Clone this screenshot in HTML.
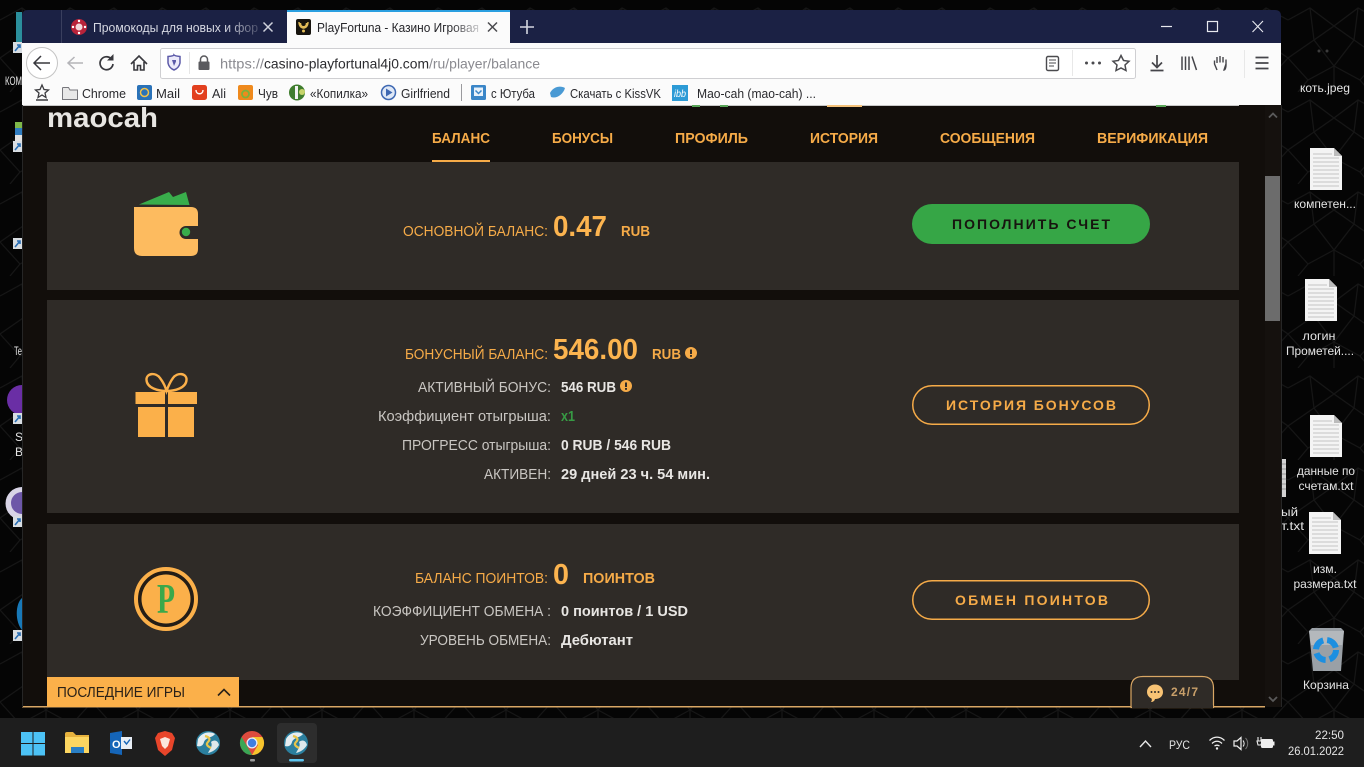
<!DOCTYPE html>
<html lang="ru"><head><meta charset="utf-8"><title>PlayFortuna</title>
<style>
html,body{margin:0;padding:0;background:#050505;width:1364px;height:767px;overflow:hidden}
svg{display:block;filter:blur(.35px)}
text{font-family:"Liberation Sans","Noto Sans CJK SC",sans-serif;white-space:pre}
.b{font-weight:700}
.o{fill:#f6ab48}.w{fill:#e8e6e3}.g{fill:#c9c6c2}
.d{fill:#e4e4e4;font-size:12px}
.bm{fill:#2a2a2e;font-size:12.5px}
</style></head><body>
<svg width="1364" height="767" viewBox="0 0 1364 767" xmlns="http://www.w3.org/2000/svg">
<defs>
<linearGradient id="f1" gradientUnits="userSpaceOnUse" x1="225" y1="0" x2="258" y2="0"><stop offset="0" stop-color="#d6d8e2"/><stop offset="1" stop-color="#4a4e6a"/></linearGradient>
<linearGradient id="f2" gradientUnits="userSpaceOnUse" x1="450" y1="0" x2="480" y2="0"><stop offset="0" stop-color="#26262a"/><stop offset="1" stop-color="#d4d4d6"/></linearGradient>
<pattern id="pt" width="92" height="92" patternUnits="userSpaceOnUse">
<path d="M0 20L22 8L46 26L70 8L92 20M22 8L26 40L0 58M70 8L66 40L92 58M26 40L46 26L66 40L46 66L26 40M46 66L46 92M0 58L20 80L46 66L72 80L92 58M20 80L10 92M72 80L82 92" fill="none" stroke="#161616" stroke-width="1.2"/>
</pattern>
<g id="doc"><path d="M0 0H24L32 8V42H0Z" fill="#f4f4f4"/><path d="M24 0V8H32Z" fill="#bcbcbc"/><path d="M3 6H22M3 10H29M3 14H29M3 18H29M3 22H29M3 26H29M3 30H29M3 34H29M3 38H29" stroke="#c4c4c4" stroke-width="1"/></g>
<g id="arr"><rect width="9" height="11" fill="#d8dde2"/><path d="M2 9L7 3M4 3H7V6" stroke="#2a6fb5" stroke-width="1.6" fill="none"/></g>
<g id="globe"><circle r="12" fill="#2b7f9e"/><path d="M-10-4C-6-11 2-12 7-9C4-5-2-6-4-1C-5 3-8 4-11 3Z" fill="#e6edf0"/><path d="M3-1C7-4 10-2 11 2C8 7 4 9 0 10C2 6 5 3 3-1Z" fill="#dfe8ea"/><path d="M-3-7C1-6 3-4 0-1C-3 2 1 4 3 5" stroke="#e8c64a" stroke-width="2.2" fill="none"/></g>
<g id="inf"><circle r="6" fill="#f6ab48"/><rect x="-1" y="-3.500" width="2" height="4.500" fill="#2f2b27"/><rect x="-1" y="2" width="2" height="1.800" fill="#2f2b27"/></g>
</defs>

<!-- desktop -->
<rect width="1364" height="767" fill="#050505"/>
<rect width="1364" height="720" fill="url(#pt)"/>
<rect x="16" y="12" width="6" height="30" fill="#2b8f9c"/>
<use href="#arr" x="13" y="42"/>
<text x="5" y="85" class="d" textLength="17" lengthAdjust="spacingAndGlyphs">КОМ</text>
<rect x="15" y="122" width="7" height="6" fill="#7fb84a"/><rect x="15" y="128" width="7" height="7" fill="#2f7cc0"/><rect x="15" y="135" width="7" height="6" fill="#e2e2e2"/>
<use href="#arr" x="13" y="141"/>
<use href="#arr" x="13" y="238"/>
<text x="14" y="355" class="d" textLength="8" lengthAdjust="spacingAndGlyphs">Te</text>
<path d="M22 385A15 15 0 0 0 22 415Z" fill="#6a2ea5"/>
<use href="#arr" x="13" y="413"/>
<text x="15" y="441" class="d">S</text><text x="15" y="456" class="d">B</text>
<path d="M22 487A16 16 0 0 0 22 520Z" fill="#d8d4e6"/><path d="M22 492A11 11 0 0 0 22 514Z" fill="#6d57a8"/>
<use href="#arr" x="13" y="516"/>
<path d="M22 598C15 604 15 622 22 630Z" fill="#1879b8"/>
<use href="#arr" x="13" y="630"/>

<circle cx="1319" cy="51" r="1.500" fill="#3c3c3c"/><circle cx="1327" cy="51" r="1.500" fill="#3c3c3c"/>
<text x="1325" y="92" class="d" text-anchor="middle" textLength="50" lengthAdjust="spacingAndGlyphs">коть.jpeg</text>
<use href="#doc" x="1310" y="148"/>
<text x="1325" y="208" class="d" text-anchor="middle" textLength="62" lengthAdjust="spacingAndGlyphs">компетен...</text>
<use href="#doc" x="1305" y="279"/>
<text x="1319" y="340" class="d" text-anchor="middle" textLength="33" lengthAdjust="spacingAndGlyphs">логин</text>
<text x="1320" y="355" class="d" text-anchor="middle" textLength="68" lengthAdjust="spacingAndGlyphs">Прометей....</text>
<use href="#doc" x="1310" y="415"/>
<text x="1326" y="475" class="d" text-anchor="middle" textLength="58" lengthAdjust="spacingAndGlyphs">данные по</text>
<text x="1326" y="490" class="d" text-anchor="middle" textLength="55" lengthAdjust="spacingAndGlyphs">счетам.txt</text>
<rect x="1281" y="459" width="5" height="38" fill="#d2d2d2"/>
<path d="M1281 464H1286M1281 469H1286M1281 474H1286M1281 479H1286M1281 484H1286M1281 489H1286" stroke="#9a9a9a"/>
<text x="1281" y="516" class="d" textLength="17" lengthAdjust="spacingAndGlyphs">ый</text>
<text x="1281" y="530" class="d" textLength="23" lengthAdjust="spacingAndGlyphs">т.txt</text>
<use href="#doc" x="1309" y="512"/>
<text x="1325" y="573" class="d" text-anchor="middle" textLength="24" lengthAdjust="spacingAndGlyphs">изм.</text>
<text x="1325" y="588" class="d" text-anchor="middle" textLength="63" lengthAdjust="spacingAndGlyphs">размера.txt</text>
<path d="M1309 631L1312 628H1341L1344 631L1341 671H1313Z" fill="#9aa0a6"/><path d="M1309 631L1344 631L1342 645H1311Z" fill="#b4b8bc"/>
<circle cx="1326" cy="650" r="10" fill="none" stroke="#1d8fe0" stroke-width="6" stroke-dasharray="12 4"/>
<text x="1326" y="689" class="d" text-anchor="middle" textLength="46" lengthAdjust="spacingAndGlyphs">Корзина</text>

<!-- window -->
<rect x="22" y="105" width="1259" height="602" fill="#120e0b"/>
<path d="M22 43V16Q22 10 28 10H1275Q1281 10 1281 16V43Z" fill="#1b2144"/>
<rect x="22" y="43" width="1259" height="62" fill="#fbfbfb"/>
<rect x="22" y="105" width="1259" height="1" fill="#c8c8c8"/>

<!-- tabs -->
<rect x="61" y="10" width="1" height="33" fill="#3a3f5e"/>
<rect x="287" y="11" width="223" height="32" fill="#fbfbfb"/>
<rect x="287" y="10" width="223" height="2" fill="#2a9fe0"/>
<circle cx="79" cy="27" r="8" fill="#b8233a"/><circle cx="79" cy="27" r="3.500" fill="#f1d7da"/><circle cx="79" cy="21" r="1.200" fill="#fff"/><circle cx="73" cy="27" r="1.200" fill="#fff"/><circle cx="85" cy="27" r="1.200" fill="#fff"/><circle cx="79" cy="33" r="1.200" fill="#fff"/>
<text x="93" y="32" font-size="13" fill="url(#f1)" textLength="165" lengthAdjust="spacingAndGlyphs">Промокоды для новых и фор</text>
<path d="M263.500 22.500L272.500 31.500M272.500 22.500L263.500 31.500" stroke="#cfd1dc" stroke-width="1.500"/>
<rect x="296" y="19" width="15" height="16" rx="2" fill="#17140e"/><path d="M299 22C299 30 308 30 308 22M300.500 23C300.500 28 306.500 28 306.500 23" stroke="#e2bc58" stroke-width="1.400" fill="none"/><circle cx="303.500" cy="31" r="1.500" fill="#e2bc58"/>
<text x="317" y="32" font-size="12.500" fill="url(#f2)" textLength="162" lengthAdjust="spacingAndGlyphs">PlayFortuna - Казино Игровая</text>
<path d="M488 22.500L497 31.500M497 22.500L488 31.500" stroke="#4a4a4e" stroke-width="1.500"/>
<path d="M527 20V34M520 27H534" stroke="#d4d6e0" stroke-width="1.600"/>
<path d="M1161 26.500H1172" stroke="#e8e9ef" stroke-width="1.200"/>
<rect x="1207.500" y="21.500" width="10" height="10" fill="none" stroke="#e8e9ef" stroke-width="1.200"/>
<path d="M1252.500 21L1263 32M1263 21L1252.500 32" stroke="#e8e9ef" stroke-width="1.100"/>

<!-- toolbar -->
<circle cx="42" cy="63" r="15.500" fill="#fff" stroke="#c4c4c4" stroke-width="1"/>
<path d="M50 63H34M41 56L34 63L41 70" fill="none" stroke="#38383d" stroke-width="1.500"/>
<path d="M83 63H68M74.500 57L68 63L74.500 69" fill="none" stroke="#b4b4b8" stroke-width="1.500"/>
<path d="M113 64A6.500 6.500 0 1 1 111 58.500" fill="none" stroke="#38383d" stroke-width="1.700"/><path d="M113.500 54V60.500H107Z" fill="#38383d"/>
<path d="M131 64L139 56L147 64M134 62V70H137.500V65.500H140.500V70H144V62" fill="none" stroke="#38383d" stroke-width="1.600"/>
<rect x="160.500" y="48.500" width="975" height="30" rx="2" fill="#fff" stroke="#cfcfd2"/>
<path d="M168 56.500Q174 56 174 55Q175 56 180 56.500V63Q179 68 174 70Q169 68 168 63Z" fill="#eceafa" stroke="#5c5aa8" stroke-width="1.500"/><path d="M172 60H176V61.500L174 66Z" fill="#5c5aa8"/>
<rect x="189" y="52" width="1" height="22" fill="#e6e6e6"/>
<rect x="198.500" y="61.500" width="11" height="8.500" rx="1" fill="#5a5a5e"/><path d="M200.500 61.500V59.500A3.500 3.500 0 0 1 207.500 59.500V61.500" fill="none" stroke="#5a5a5e" stroke-width="1.500"/>
<text x="220" y="68.500" font-size="14" fill="#8a8a90" textLength="44" lengthAdjust="spacingAndGlyphs">https://</text>
<text x="264" y="68.500" font-size="14" fill="#2c2c30" textLength="165" lengthAdjust="spacingAndGlyphs">casino-playfortunal4j0.com</text>
<text x="429" y="68.500" font-size="14" fill="#8a8a90" textLength="111" lengthAdjust="spacingAndGlyphs">/ru/player/balance</text>
<rect x="1046.500" y="56.500" width="12" height="14" rx="1.500" fill="none" stroke="#4a4a4e" stroke-width="1.400"/><path d="M1049 60H1056M1049 63H1056M1049 66H1054" stroke="#4a4a4e"/>
<rect x="1072" y="50" width="1" height="26" fill="#e8e8e8"/>
<circle cx="1086.500" cy="63" r="1.500" fill="#4a4a4e"/><circle cx="1093" cy="63" r="1.500" fill="#4a4a4e"/><circle cx="1099.500" cy="63" r="1.500" fill="#4a4a4e"/>
<path d="M1121 55.500L1123.500 60.500L1129 61.300L1125 65L1126 70.500L1121 68L1116 70.500L1117 65L1113 61.300L1118.500 60.500Z" fill="none" stroke="#4a4a4e" stroke-width="1.500"/>
<path d="M1157 55V67M1152 62.500L1157 67.500L1162 62.500M1150.500 70.500H1163.500" fill="none" stroke="#45454a" stroke-width="1.700"/>
<path d="M1182 56.500V70M1185.500 56.500V70M1189 56.500V70M1192 56.500L1196.500 70" fill="none" stroke="#45454a" stroke-width="1.500"/>
<path d="M1217 70L1214.500 64V60.500M1217 63V57M1220 62.500V56M1223 62.500V57M1226 64V59.500V65C1226 68 1225 70 1224 70Z" fill="none" stroke="#45454a" stroke-width="1.400"/>
<rect x="1244" y="50" width="1" height="28" fill="#e8e8e8"/>
<path d="M1255.500 57.500H1268.500M1255.500 63H1268.500M1255.500 68.500H1268.500" stroke="#45454a" stroke-width="1.800"/>

<!-- bookmarks -->
<path d="M42 85L44 89.500L48.500 90L45 93L46 97.500L42 95L38 97.500L39 93L35.500 90L40 89.500Z" fill="none" stroke="#3c3c40" stroke-width="1.300"/><path d="M36 100H48" stroke="#3c3c40" stroke-width="1.500"/>
<path d="M62.500 88V99.500H77.500V90H70L68.500 87.500H63Z" fill="#e8e8e8" stroke="#77777c"/>
<text x="82" y="98" class="bm" textLength="44" lengthAdjust="spacingAndGlyphs">Chrome</text>
<rect x="137" y="85" width="15" height="15" rx="2" fill="#2a72b8"/><circle cx="144.500" cy="92.500" r="4" fill="none" stroke="#f2c14a" stroke-width="1.500"/>
<text x="156" y="98" class="bm" textLength="24" lengthAdjust="spacingAndGlyphs">Mail</text>
<rect x="192" y="85" width="15" height="15" rx="2.500" fill="#e2401f"/><path d="M196 90C196 95 203 95 203 90" stroke="#fff" stroke-width="1.400" fill="none"/>
<text x="212" y="98" class="bm" textLength="14" lengthAdjust="spacingAndGlyphs">Ali</text>
<rect x="238" y="85" width="15" height="15" rx="2" fill="#ef8a1d"/><circle cx="245.500" cy="94" r="3.500" fill="none" stroke="#7cb23a" stroke-width="1.800"/>
<text x="258" y="98" class="bm" textLength="20" lengthAdjust="spacingAndGlyphs">Чув</text>
<circle cx="297" cy="92.500" r="8" fill="#3f7d2e"/><rect x="295" y="86" width="3" height="13" fill="#f2f2f2"/><circle cx="302" cy="92" r="3" fill="#c6d46a"/>
<text x="310" y="98" class="bm" textLength="58" lengthAdjust="spacingAndGlyphs">«Копилка»</text>
<circle cx="388.500" cy="92.500" r="7" fill="#dfe8f6" stroke="#3e68b2" stroke-width="1.500"/><path d="M386 88.500V96.500L392.500 92.500Z" fill="#3e68b2"/>
<text x="401" y="98" class="bm" textLength="49" lengthAdjust="spacingAndGlyphs">Girlfriend</text>
<rect x="461" y="84" width="1" height="17" fill="#9a9a9e"/>
<rect x="471" y="85" width="15" height="15" rx="1.500" fill="#3a86c8"/><path d="M474 87.500H483V96H474Z" fill="#e8f1fa"/><path d="M475.500 90.500L478.500 93.500L481.500 90.500" stroke="#3a86c8" stroke-width="1.500" fill="none"/>
<text x="491" y="98" class="bm" textLength="44" lengthAdjust="spacingAndGlyphs">с Ютуба</text>
<path d="M550 93C553 87 560 85 565 88C563 95 556 99 551 97Z" fill="#4a9ad4"/>
<text x="570" y="98" class="bm" textLength="91" lengthAdjust="spacingAndGlyphs">Скачать с KissVK</text>
<rect x="672" y="85" width="16" height="16" fill="#2d9bd6"/>
<text x="674" y="97" font-size="10" font-style="italic" fill="#fff" textLength="12" lengthAdjust="spacingAndGlyphs">ibb</text>
<text x="697" y="98" class="bm" textLength="119" lengthAdjust="spacingAndGlyphs">Mao-cah (mao-cah) ...</text>

<!-- page strip leaks -->
<rect x="827" y="105" width="35" height="2" fill="#f5c27a"/>
<rect x="692" y="105" width="8" height="2" fill="#5aa65a"/><rect x="720" y="105" width="8" height="2" fill="#5aa65a"/>
<rect x="1156" y="105" width="10" height="2" fill="#5aa65a"/>

<!-- header -->
<text x="47" y="127" class="b w" font-size="28" fill="#f0efee" textLength="111" lengthAdjust="spacingAndGlyphs">maocah</text>
<g class="b o" font-size="14.500">
<text x="432" y="143" textLength="58" lengthAdjust="spacingAndGlyphs">БАЛАНС</text>
<text x="552" y="143" textLength="61" lengthAdjust="spacingAndGlyphs">БОНУСЫ</text>
<text x="675" y="143" textLength="73" lengthAdjust="spacingAndGlyphs">ПРОФИЛЬ</text>
<text x="810" y="143" textLength="68" lengthAdjust="spacingAndGlyphs">ИСТОРИЯ</text>
<text x="940" y="143" textLength="95" lengthAdjust="spacingAndGlyphs">СООБЩЕНИЯ</text>
<text x="1097" y="143" textLength="111" lengthAdjust="spacingAndGlyphs">ВЕРИФИКАЦИЯ</text>
</g>

<!-- cards -->
<rect x="47" y="162" width="1192" height="128" fill="#2f2b27"/>
<rect x="47" y="300" width="1192" height="213" fill="#2f2b27"/>
<rect x="47" y="524" width="1192" height="156" fill="#2f2b27"/>
<rect x="432" y="160" width="58" height="2" fill="#f6ab48"/>

<!-- wallet -->
<path d="M139 204.500L169 192L173 197L186 192L189.500 205Z" fill="#39ad4b"/>
<path d="M134 207H191Q198 207 198 214V226H186A6.500 6.500 0 0 0 186 239H198V249Q198 256 191 256H142Q134 256 134 248Z" fill="#fdbb5f"/>
<circle cx="186" cy="232" r="4.200" fill="#39ad4b"/>

<!-- gift -->
<g fill="#fbb04a">
<rect x="135.500" y="392" width="29.500" height="12"/><rect x="168" y="392" width="29" height="12"/>
<rect x="138" y="407" width="27" height="30"/><rect x="168" y="407" width="26" height="30"/>
</g>
<path d="M166.500 391C158 391 147 388 146.500 380C146 373 156 372 160 378C163 382 165.500 387 166.500 391C168 387 170 382 173 378C177 372 187 373 186.500 380C186 388 175 391 166.500 391Z" fill="none" stroke="#fbb04a" stroke-width="2.400"/>

<!-- coin -->
<circle cx="166" cy="599" r="30" fill="#241d16" stroke="#fbb04a" stroke-width="4"/>
<circle cx="166" cy="599" r="24.500" fill="#fbb04a"/>
<text x="157" y="613" font-size="42" font-weight="700" style="font-family:'Liberation Serif',serif" fill="#3ba84a" textLength="18" lengthAdjust="spacingAndGlyphs">P</text>

<!-- card1 text -->
<text x="403" y="236" class="o" font-size="15" textLength="145" lengthAdjust="spacingAndGlyphs">ОСНОВНОЙ БАЛАНС:</text>
<text x="553" y="236" class="b" fill="#fcb44f" font-size="29" textLength="54" lengthAdjust="spacingAndGlyphs">0.47</text>
<text x="621" y="236" class="b o" font-size="14.500" textLength="29" lengthAdjust="spacingAndGlyphs">RUB</text>
<rect x="912" y="204" width="238" height="40" rx="20" fill="#36a646"/>
<text x="952" y="229" class="b" font-size="14" fill="#17140f" textLength="158" lengthAdjust="spacing">ПОПОЛНИТЬ СЧЕТ</text>

<!-- card2 text -->
<text x="405" y="359" class="o" font-size="15" textLength="143" lengthAdjust="spacingAndGlyphs">БОНУСНЫЙ БАЛАНС:</text>
<text x="553" y="359" class="b" fill="#fcb44f" font-size="29" textLength="85" lengthAdjust="spacingAndGlyphs">546.00</text>
<text x="652" y="359" class="b o" font-size="14.500" textLength="29" lengthAdjust="spacingAndGlyphs">RUB</text>
<use href="#inf" x="691" y="353"/>
<text x="418" y="392" class="g" font-size="15" textLength="133" lengthAdjust="spacingAndGlyphs">АКТИВНЫЙ БОНУС:</text>
<text x="561" y="392" class="b w" font-size="14.500" textLength="55" lengthAdjust="spacingAndGlyphs">546 RUB</text>
<use href="#inf" x="626" y="386"/>
<text x="378" y="421" class="g" font-size="15" textLength="173" lengthAdjust="spacingAndGlyphs">Коэффициент отыгрыша:</text>
<text x="561" y="421" class="b" font-size="14.500" fill="#379a44" textLength="14" lengthAdjust="spacingAndGlyphs">x1</text>
<text x="402" y="450" class="g" font-size="15" textLength="149" lengthAdjust="spacingAndGlyphs">ПРОГРЕСС отыгрыша:</text>
<text x="561" y="450" class="b w" font-size="14.500" textLength="110" lengthAdjust="spacingAndGlyphs">0 RUB / 546 RUB</text>
<text x="484" y="479" class="g" font-size="15" textLength="67" lengthAdjust="spacingAndGlyphs">АКТИВЕН:</text>
<text x="561" y="479" class="b w" font-size="14.500" textLength="149" lengthAdjust="spacingAndGlyphs">29 дней 23 ч. 54 мин.</text>
<rect x="912.750" y="385.750" width="236.500" height="38.500" rx="19.250" fill="none" stroke="#f6ab48" stroke-width="1.500"/>
<text x="946" y="410" class="b o" font-size="14" textLength="170" lengthAdjust="spacing">ИСТОРИЯ БОНУСОВ</text>

<!-- card3 text -->
<text x="415" y="583" class="o" font-size="15" textLength="133" lengthAdjust="spacingAndGlyphs">БАЛАНС ПОИНТОВ:</text>
<text x="553" y="584" class="b" fill="#fcb44f" font-size="29" textLength="16" lengthAdjust="spacingAndGlyphs">0</text>
<text x="583" y="583" class="b o" font-size="14.500" textLength="72" lengthAdjust="spacingAndGlyphs">ПОИНТОВ</text>
<text x="373" y="616" class="g" font-size="15" textLength="178" lengthAdjust="spacingAndGlyphs">КОЭФФИЦИЕНТ ОБМЕНА :</text>
<text x="561" y="616" class="b w" font-size="14.500" textLength="127" lengthAdjust="spacingAndGlyphs">0 поинтов / 1 USD</text>
<text x="420" y="645" class="g" font-size="15" textLength="131" lengthAdjust="spacingAndGlyphs">УРОВЕНЬ ОБМЕНА:</text>
<text x="561" y="645" class="b w" font-size="14.500" textLength="72" lengthAdjust="spacingAndGlyphs">Дебютант</text>
<rect x="912.750" y="580.750" width="236.500" height="38.500" rx="19.250" fill="none" stroke="#f6ab48" stroke-width="1.500"/>
<text x="955" y="605" class="b o" font-size="14" textLength="153" lengthAdjust="spacing">ОБМЕН ПОИНТОВ</text>

<!-- bottom bar -->
<rect x="1239" y="105" width="26" height="602" fill="#120e0b"/>
<rect x="47" y="680" width="1192" height="26" fill="#120e0b"/>
<rect x="22" y="706" width="1243" height="1.500" fill="#d9a765"/>
<rect x="47" y="677" width="192" height="30" fill="#fbb04a"/>
<text x="57" y="697" font-size="14.500" fill="#2a2118" textLength="128" lengthAdjust="spacingAndGlyphs">ПОСЛЕДНИЕ ИГРЫ</text>
<path d="M218 695.500L224 689.500L230 695.500" fill="none" stroke="#2a2118" stroke-width="1.600"/>
<path d="M1131 707.500V688Q1131 676.500 1143 676.500H1202Q1213.500 676.500 1213.500 688V707.500Z" fill="#2f2b27" stroke="#d9a765" stroke-width="1.200"/>
<rect x="1132" y="705" width="81" height="3" fill="#2f2b27"/>
<path d="M1155 684.500C1160 684.500 1163 688 1163 692C1163 696 1160 699 1155 699C1154.500 701 1153 702 1151 702C1152 701 1152 699.500 1151.500 698.500C1149 697.500 1147 695 1147 692C1147 688 1150 684.500 1155 684.500Z" fill="#f8c374"/>
<circle cx="1151.500" cy="692" r="1" fill="#2f2b27"/><circle cx="1155" cy="692" r="1" fill="#2f2b27"/><circle cx="1158.500" cy="692" r="1" fill="#2f2b27"/>
<text x="1171" y="696" class="b" font-size="12" fill="#c9a06a" textLength="27" lengthAdjust="spacing">24/7</text>

<!-- scrollbar -->
<rect x="1265" y="105" width="16" height="602" fill="#15110e"/>
<rect x="1265" y="176" width="15" height="145" fill="#6c6c6c"/>
<path d="M1269 117.500L1273 113.500L1277 117.500" fill="none" stroke="#5a5a5a" stroke-width="1.800"/>
<path d="M1269 697L1273 701L1277 697" fill="none" stroke="#5a5a5a" stroke-width="1.800"/>
<rect x="1281" y="105" width="1" height="602" fill="#262626"/>
<rect x="22" y="105" width="1" height="602" fill="#262626"/>

<!-- taskbar -->
<rect y="718" width="1364" height="49" fill="#1e1e1e"/>
<rect x="277" y="723" width="40" height="40" rx="4" fill="#2d2d2d"/>
<g fill="#4cc2f5"><rect x="21" y="732" width="11.500" height="11"/><rect x="33.500" y="732" width="11.500" height="11"/><rect x="21" y="744" width="11.500" height="11.500"/><rect x="33.500" y="744" width="11.500" height="11.500"/></g>
<path d="M65 734Q65 732 67 732H73L76 735H89V753H65Z" fill="#e6b23e"/><rect x="65" y="737" width="24" height="16" fill="#fcd661"/><rect x="71" y="747" width="13" height="6" fill="#2a7fc4"/>
<path d="M110 733L122 731V755L110 753Z" fill="#1565b8"/><rect x="121" y="737" width="11" height="12" fill="#e8eef5"/><text x="112" y="748" class="b" font-size="11" fill="#fff">O</text><path d="M124 741L126.500 744L130 739.500" stroke="#1565b8" stroke-width="1.400" fill="none"/>
<path d="M158 733L165 731L172 733L175 738L172 750L165 756L158 750L155 738Z" fill="#e8452a"/><path d="M160 739L165 737L170 739L168 746L165 749L162 746Z" fill="#fbe6dc"/>
<use href="#globe" x="208" y="743"/>
<circle cx="252" cy="743" r="12" fill="#dd4b3e"/><path d="M252 755A12 12 0 0 1 241.600 737L247 746L252 755Z" fill="#3aa655"/><path d="M262.400 737A12 12 0 0 1 252 755L258 745L252 737Z" fill="#f6c42c"/><circle cx="252" cy="743" r="5.500" fill="#e8eef8"/><circle cx="252" cy="743" r="4.200" fill="#3f7ee0"/>
<rect x="250" y="759" width="5" height="2.500" rx="1" fill="#9a9a9a"/>
<use href="#globe" x="296" y="743"/>
<rect x="289" y="759" width="15" height="2.500" rx="1.200" fill="#5cc4ee"/>

<!-- tray -->
<path d="M1140 747L1145.500 741L1151 747" fill="none" stroke="#e8e8e8" stroke-width="1.400"/>
<text x="1169" y="749" class="d" textLength="21" lengthAdjust="spacingAndGlyphs">РУС</text>
<path d="M1209.500 740.500C1214 736 1220 736 1224.500 740.500M1212 743.500C1215 740.500 1219 740.500 1222 743.500M1214.500 746C1216 745 1218 745 1219.500 746" fill="none" stroke="#eee" stroke-width="1.300"/><circle cx="1217" cy="748.500" r="1.200" fill="#eee"/>
<path d="M1234 741H1237L1241 737.500V749.500L1237 746H1234Z" fill="none" stroke="#eee" stroke-width="1.200"/>
<path d="M1243 740.500A4.500 4.500 0 0 1 1243 746.500" fill="none" stroke="#eee" stroke-width="1"/><path d="M1245.500 738A8 8 0 0 1 1245.500 749" fill="none" stroke="#777" stroke-width="1"/>
<rect x="1261" y="739" width="12" height="9" rx="1.500" fill="#eee"/><rect x="1273" y="741.500" width="1.500" height="4" fill="#eee"/>
<path d="M1258 737V741M1261 737V741M1257 741H1262L1261 745H1258Z" fill="none" stroke="#eee" stroke-width="1.100"/>
<text x="1344" y="739" class="d" text-anchor="end" textLength="29" lengthAdjust="spacingAndGlyphs">22:50</text>
<text x="1344" y="755" class="d" text-anchor="end" textLength="56" lengthAdjust="spacingAndGlyphs">26.01.2022</text>
</svg>
</body></html>
